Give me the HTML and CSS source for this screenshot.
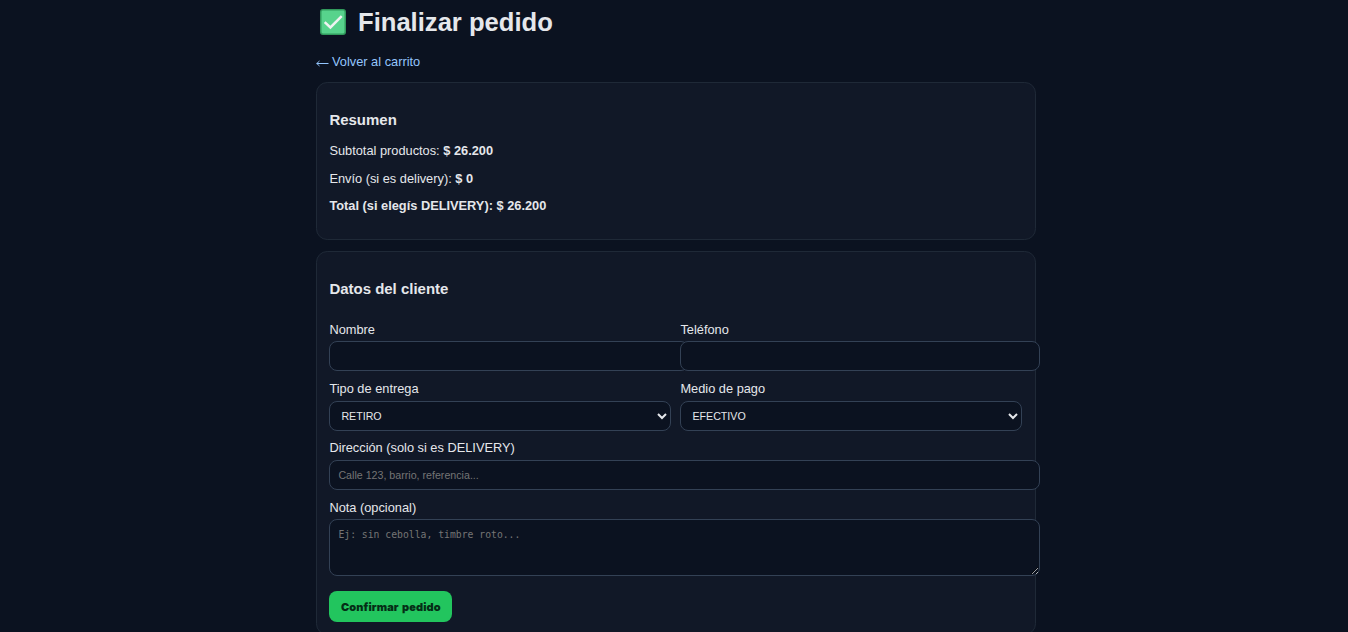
FILE: index.html
```
<!DOCTYPE html>
<html lang="es">

<head>
    <meta charset="UTF-8">
    <meta name="viewport" content="width=device-width, initial-scale=1.0">
    <title>Finalizar pedido</title>
    <link rel="stylesheet" href="styles.css">
</head>

<body>
    <div class="container">
        <h1>
            <svg class="check" viewBox="0 0 26 26" aria-hidden="true">
                <rect x="0.75" y="0.75" width="24.5" height="24.5" rx="2.2" fill="#57d38c" stroke="#319a5c" stroke-width="1.5"/>
                <path d="M4.7 13.2l5.7 5.3L21.7 7.2" fill="none" stroke="#eef3f1" stroke-width="2.5"/>
            </svg>
            <span>Finalizar pedido</span>
        </h1>
        <a class="volver" href="#"><svg class="flecha" viewBox="0 0 13 9" aria-hidden="true"><path d="M12.5 5.5H0.5M3.5 3L0.8 5.5l2.7 2.5" fill="none" stroke="currentColor"/></svg>Volver al carrito</a>

        <div class="card">
            <h3>Resumen</h3>
            <p>Subtotal productos: <b>$ 26.200</b></p>
            <p>Envío (si es delivery): <b>$ 0</b></p>
            <p><b>Total (si elegís DELIVERY): $ 26.200</b></p>
        </div>

        <div class="card">
            <h3>Datos del cliente</h3>
            <form>
                <div class="row">
                    <div>
                        <label for="nombre">Nombre</label>
                        <input type="text" id="nombre" required>
                    </div>
                    <div>
                        <label for="telefono">Teléfono</label>
                        <input type="text" id="telefono" required>
                    </div>
                </div>
                <div class="row">
                    <div>
                        <label for="entrega">Tipo de entrega</label>
                        <select id="entrega">
                            <option>RETIRO</option>
                            <option>DELIVERY</option>
                        </select>
                    </div>
                    <div>
                        <label for="pago">Medio de pago</label>
                        <select id="pago">
                            <option>EFECTIVO</option>
                            <option>TRANSFERENCIA</option>
                        </select>
                    </div>
                </div>
                <label for="direccion">Dirección (solo si es DELIVERY)</label>
                <input type="text" id="direccion" placeholder="Calle 123, barrio, referencia...">
                <label for="nota">Nota (opcional)</label>
                <textarea id="nota" rows="3" placeholder="Ej: sin cebolla, timbre roto..."></textarea>
                <button type="submit">Confirmar pedido</button>
            </form>
        </div>
    </div>
</body>

</html>
```

FILE: styles.css
```
body {
    font-family: Arial, "Liberation Sans", sans-serif;
    font-size: 12.8px;
    line-height: 14.7px;
    background: #0b1220;
    color: #e5e7eb;
    margin: 0;
    height: 632px;
    overflow: hidden;
}

.container {
    width: 720px;
    margin: 0 auto;
    padding: 7px 0 0 4px;
}

h1 {
    display: flex;
    align-items: center;
    gap: 12px;
    margin: 0;
    padding-left: 4px;
    font-size: 25.6px;
    line-height: 30px;
}

.check {
    width: 26px;
    height: 26px;
}

.volver {
    display: flex;
    align-items: center;
    gap: 3px;
    margin: 18px 0 12.3px;
    color: #93c5fd;
    text-decoration: none;
}

.flecha {
    width: 13px;
    height: 9px;
}

.card {
    box-sizing: border-box;
    background: #111827;
    border: 1px solid #1f2937;
    border-radius: 11.2px;
    padding: 12.8px 13.1px 12.1px 12.4px;
    margin-bottom: 11.2px;
}

h3 {
    font-size: 14.98px;
    line-height: 17px;
    margin: 15px 0;
}

p {
    margin: 12.8px 0;
}

h3 + p {
    margin-top: 16.3px;
}

.row {
    display: grid;
    grid-template-columns: 1fr 1fr;
    gap: 9.6px;
}

.row > div {
    min-width: 0;
}

label {
    display: block;
    margin: 10.9px 0 3.8px;
}

input,
select,
textarea {
    width: 100%;
    padding: 8px;
    border: 1px solid #334155;
    border-radius: 8px;
    background: #0b1220;
    color: #e5e7eb;
    font-family: Arial, "Liberation Sans", sans-serif;
    font-size: 10.67px;
}

input {
    display: block;
    height: 12px;
}

select {
    display: block;
    height: 30px;
    margin: 4.6px 0 -0.8px;
    padding: 7px;
}

textarea {
    display: block;
    height: 39px;
    font-family: "DejaVu Sans Mono", monospace;
    font-size: 9.75px;
    line-height: 13px;
}

button {
    display: block;
    width: 123px;
    height: 31px;
    margin-top: 15px;
    padding: 0;
    border: none;
    border-radius: 8px;
    background: #22c55e;
    color: #052e16;
    font-family: Inter, sans-serif;
    font-size: 11px;
    font-weight: 900;
    letter-spacing: 0.1px;
    word-spacing: 1px;
    cursor: pointer;
}
```
